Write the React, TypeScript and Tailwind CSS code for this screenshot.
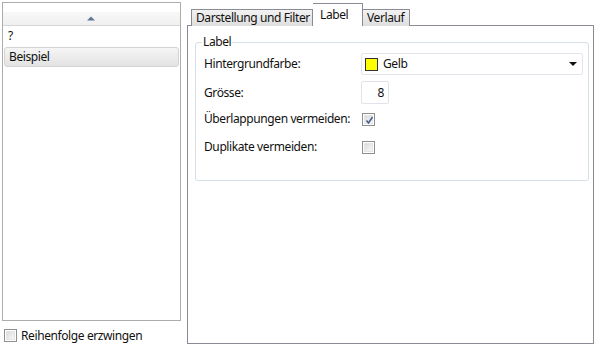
import React from "react";

const font = { fontFamily: '"Noto Sans", "Open Sans", sans-serif', letterSpacing: "-0.4px" };

function Check({ checked }: { checked?: boolean }) {
  return (
    <div className="w-[13px] h-[13px] border border-[#8e8f8f] bg-white p-[1px] shrink-0">
      <div className="w-full h-full bg-gradient-to-br from-[#dcdcdc] to-[#f8f8f8] border border-[#e4e4e4] relative">
        {checked && (
          <svg className="absolute left-[0px] top-[0px]" width="9" height="9" viewBox="0 0 9 9">
            <path d="M1.5 4.5 L3.5 7 L7.5 1" fill="none" stroke="#4b5d8e" strokeWidth="1.6" />
          </svg>
        )}
      </div>
    </div>
  );
}

export default function App() {
  return (
    <div className="w-[598px] h-[348px] bg-white flex text-[12px] text-[#111]" style={font}>
      {/* left column */}
      <div className="ml-[2px] mt-[2px] w-[179px] flex flex-col">
        <div className="h-[319px] border border-[#acacac] flex flex-col">
          <div className="mt-[9px] h-[14px] bg-gradient-to-b from-[#f8f8f8] to-[#f0f0f0] border-b border-[#d5d5d5] flex items-center justify-center">
            <svg width="8" height="5" viewBox="0 0 8 5" className="ml-[-2px]">
              <path d="M0 4.5 L4 0.5 L8 4.5 Z" fill="#5f7591" />
            </svg>
          </div>
          <div className="h-[20px] pl-[5px] flex items-center">?</div>
          <div className="mx-[1px] mt-[1px] h-[20px] rounded-[3px] border border-[#d3d3d3] bg-gradient-to-b from-[#f5f5f5] to-[#e3e3e3] pl-[4px] flex items-center">
            Beispiel
          </div>
        </div>
        <div className="mt-[8px] ml-[2px] flex items-center gap-[4px] h-[13px]">
          <Check />
          <span>Reihenfolge erzwingen</span>
        </div>
      </div>

      {/* right column */}
      <div className="ml-[6px] mt-[3px] w-[407px] flex flex-col">
        <div className="h-[22px] flex items-end pl-[4px] relative z-10">
          <div className="h-[17px] mb-[-1px] w-[122px] pl-[4px] border border-[#898c95] border-b-0 bg-gradient-to-b from-[#f2f2f2] to-[#dedede] flex items-center">
            Darstellung und Filter
          </div>
          <div className="h-[23px] mb-[-1px] pl-[7px] border border-[#898c95] border-b-0 border-l-0 bg-white flex items-start pt-[2px] w-[50px]">
            Label
          </div>
          <div className="h-[17px] mb-[-1px] w-[47px] pl-[4px] border border-[#898c95] border-b-0 border-l-0 bg-gradient-to-b from-[#f2f2f2] to-[#dedede] flex items-center">
            Verlauf
          </div>
        </div>
        <div className="h-[319px] border border-[#898c95] bg-white pt-[16px] pl-[7px] pr-[4px]">
          <div className="relative h-[139px] border border-[#d5dfe5] rounded-[3px] pl-[8px] pt-[10px]">
            <div className="absolute left-[6px] top-[-9px] bg-white px-[1px] leading-[16px]">Label</div>
            <div className="flex items-center h-[22px]">
              <div className="w-[157px]">Hintergrundfarbe:</div>
              <div className="w-[222px] h-[22px] border border-[#e2e3ea] rounded-[2px] flex items-center pl-[3px] pr-[5px]">
                <div className="w-[13px] h-[13px] bg-[#ffff00] border border-[#333]" />
                <span className="ml-[5px] flex-1">Gelb</span>
                <svg width="8" height="4" viewBox="0 0 8 4">
                  <path d="M0 0 L8 0 L4 4 Z" fill="#111" />
                </svg>
              </div>
            </div>
            <div className="flex items-center h-[23px] mt-[6px]">
              <div className="w-[157px]">Grösse:</div>
              <div className="w-[28px] h-[23px] border border-[#e2e3ea] rounded-[2px] flex items-center justify-end pr-[4px]">8</div>
            </div>
            <div className="flex items-center h-[20px] mt-[5px]">
              <div className="w-[158px]">Überlappungen vermeiden:</div>
              <Check checked />
            </div>
            <div className="flex items-center h-[20px] mt-[8px]">
              <div className="w-[158px]">Duplikate vermeiden:</div>
              <Check />
            </div>
          </div>
        </div>
      </div>
    </div>
  );
}
